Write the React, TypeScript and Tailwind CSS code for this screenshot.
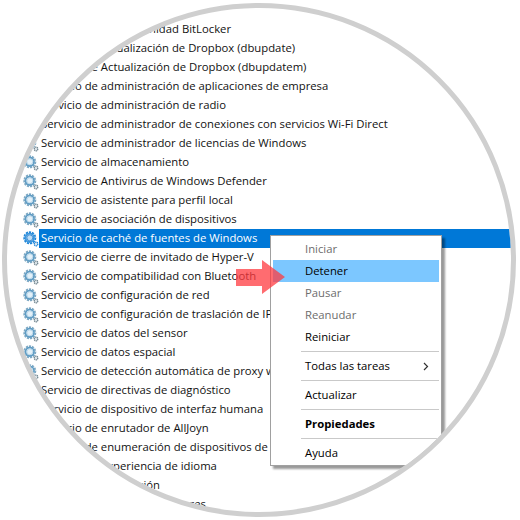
const rows = [
  "Servicio Cifrado de unidad BitLocker",
  "Servicio de actualización de Dropbox (dbupdate)",
  "Servicio de Actualización de Dropbox (dbupdatem)",
  "Servicio de administración de aplicaciones de empresa",
  "Servicio de administración de radio",
  "Servicio de administrador de conexiones con servicios Wi-Fi Direct",
  "Servicio de administrador de licencias de Windows",
  "Servicio de almacenamiento",
  "Servicio de Antivirus de Windows Defender",
  "Servicio de asistente para perfil local",
  "Servicio de asociación de dispositivos",
  "Servicio de caché de fuentes de Windows",
  "Servicio de cierre de invitado de Hyper-V",
  "Servicio de compatibilidad con Bluetooth",
  "Servicio de configuración de red",
  "Servicio de configuración de traslación de IP",
  "Servicio de datos del sensor",
  "Servicio de datos espacial",
  "Servicio de detección automática de proxy web",
  "Servicio de directivas de diagnóstico",
  "Servicio de dispositivo de interfaz humana",
  "Servicio de enrutador de AllJoyn",
  "Servicio de enumeración de dispositivos de",
  "Servicio de experiencia de idioma",
  "Servicio de finalización",
  "Servicio de informes de errores",
];

function Gear({ selected }: { selected?: boolean }) {
  return (
    <svg width="16" height="16" viewBox="0 0 16 16" className="shrink-0">
      <circle cx="6.8" cy="6.8" r="5.6" fill="none" stroke={selected ? "#1f86d8" : "#7fa9c4"} strokeWidth="1.8" strokeDasharray="2.2 0.9" />
      <circle cx="6.8" cy="6.8" r="4.2" fill="none" stroke={selected ? "#3d97de" : "#5f9cc4"} strokeWidth="1.8" />
      <circle cx="6.8" cy="6.8" r="3" fill={selected ? "#bcdcf5" : "#e4f1f9"} stroke={selected ? "#1f78c8" : "#a9cde3"} strokeWidth="0.8" />
      <circle cx="13" cy="13" r="1.8" fill="#dfe7ec" stroke={selected ? "#1f86d8" : "#71858f"} strokeWidth="1.3" strokeDasharray="1.2 0.5" />
    </svg>
  );
}

function MenuItem({ label, muted, bold, active }: { label: string; muted?: boolean; bold?: boolean; active?: boolean }) {
  return (
    <div className={`h-[22px] pl-[32px] flex items-center ${active ? "bg-[#7cc7ff]" : ""} ${muted ? "text-[#6d6d6d]" : "text-black"} ${bold ? "font-bold" : ""}`}>
      {label}
    </div>
  );
}

function Separator() {
  return <div className="ml-[28px] my-[3px] h-px bg-[#c9c9c9]" />;
}

export default function App() {
  return (
    <div className="w-[520px] h-[520px] bg-white overflow-hidden font-['Open_Sans','Liberation_Sans',sans-serif]">
      <div className="relative ml-[2px] mt-[3px] w-[514px] h-[514px] rounded-full border-[5px] border-[#cfcfcf] overflow-hidden text-[11.3px] text-[#111]">
        <div className="pt-[12px] pl-[16px]">
          {rows.map((name, i) => (
            <div key={name} className="h-[19px] flex items-center whitespace-nowrap">
              <Gear selected={i === 11} />
              <span className={`h-[19px] pl-[2px] flex items-center ${i === 11 ? "flex-1 bg-[#0078d7] text-white" : ""}`}>{name}</span>
            </div>
          ))}
        </div>

        <div className="absolute left-[263px] top-[227px] w-[172px] pt-[2px] pb-[1px] px-[2px] bg-white border border-[#a0a0a0] shadow-[3px_3px_2px_rgba(0,0,0,0.4)] text-[11.3px]">
          <MenuItem label="Iniciar" muted />
          <MenuItem label="Detener" active />
          <MenuItem label="Pausar" muted />
          <MenuItem label="Reanudar" muted />
          <MenuItem label="Reiniciar" />
          <Separator />
          <div className="h-[22px] pl-[32px] pr-[10px] flex items-center justify-between text-black">
            <span>Todas las tareas</span>
            <svg width="6" height="9" viewBox="0 0 6 9"><path d="M1 1l3.5 3.5L1 8" fill="none" stroke="#333" strokeWidth="1.2" /></svg>
          </div>
          <Separator />
          <MenuItem label="Actualizar" />
          <Separator />
          <MenuItem label="Propiedades" bold />
          <Separator />
          <MenuItem label="Ayuda" />
        </div>

        <svg className="absolute left-[229px] top-[252px]" width="50" height="36" viewBox="0 0 50 36">
          <path d="M0 9H26V0L49 17L26 34V26H0Z" fill="#ff3b40" fillOpacity="0.75" />
        </svg>
      </div>
    </div>
  );
}
